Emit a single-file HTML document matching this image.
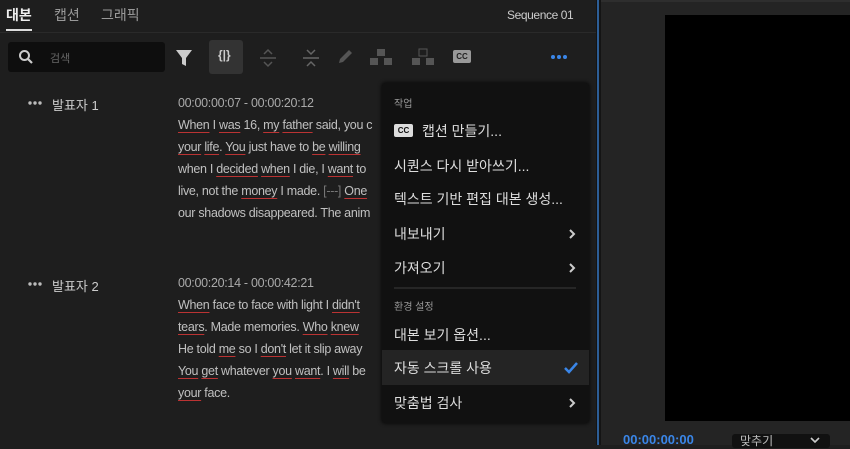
<!DOCTYPE html>
<html><head><meta charset="utf-8"><style>
*{margin:0;padding:0;box-sizing:border-box}
body{width:850px;height:445px;overflow:hidden;background:#1e1e1e;font-family:"Liberation Sans","Noto Sans CJK KR",sans-serif;position:relative;color:#ddd}
.a{position:absolute}
.tab{font-size:14px;color:#999;top:5px}
.u{text-decoration:underline;text-decoration-color:#b33;text-underline-offset:3px}
.tx{font-size:12.5px;color:#c0c0c0;line-height:22px;letter-spacing:-0.3px;white-space:nowrap}
.mi{position:absolute;left:394px;font-size:14px;color:#ddd;white-space:nowrap}
.mh{position:absolute;left:394px;font-size:10px;color:#999}
.chev{position:absolute;left:568px}
.dots{position:absolute;width:16px;height:4px}
</style></head><body>
<div class="a" style="left:0;top:0;width:596px;height:445px;background:#1e1e1e"></div>
<div class="a tab" style="left:6px;color:#eee;font-weight:bold">대본</div>
<div class="a" style="left:6px;top:29px;width:26px;height:2px;background:#ddd"></div>
<div class="a tab" style="left:54px">캡션</div>
<div class="a tab" style="left:101px">그래픽</div>
<div class="a" style="left:507px;top:8px;font-size:12px;color:#ccc;letter-spacing:-0.4px">Sequence 01</div>
<div class="a" style="left:0;top:32px;width:596px;height:1px;background:#2a2a2a"></div>
<div class="a" style="left:8px;top:42px;width:157px;height:30px;background:#0e0e0e;border-radius:3px"></div>
<svg class="a" style="left:18px;top:49px" width="16" height="16"><circle cx="6.5" cy="6.5" r="4.5" fill="none" stroke="#ccc" stroke-width="2"/><line x1="10" y1="10" x2="14" y2="14" stroke="#ccc" stroke-width="2.2"/></svg>
<div class="a" style="left:50px;top:50px;font-size:11px;color:#666">검색</div>
<svg class="a" style="left:175px;top:48px" width="18" height="20"><path d="M1 2H17L11 10V18L7 16V10Z" fill="#ccc"/></svg>
<div class="a" style="left:209px;top:40px;width:34px;height:34px;background:#333;border-radius:3px"></div>
<div class="a" style="left:218px;top:48px;font-size:12px;color:#ccc;font-weight:bold">{|}</div>
<svg class="a" style="left:258px;top:48px" width="20" height="20" stroke="#555" stroke-width="1.5" fill="none"><path d="M6 6L10 2L14 6M2 10H18M6 14L10 18L14 14"/></svg>
<svg class="a" style="left:301px;top:48px" width="20" height="20" stroke="#666" stroke-width="1.5" fill="none"><path d="M6 2L10 6L14 2M2 10H18M6 18L10 14L14 18"/></svg>
<svg class="a" style="left:336px;top:48px" width="18" height="18"><path d="M3 15L4 11L13 2L16 5L7 14Z" fill="#555"/></svg>
<svg class="a" style="left:369px;top:48px" width="24" height="18" fill="#555"><rect x="8" y="1" width="8" height="7"/><rect x="1" y="10" width="8" height="7"/><rect x="15" y="10" width="8" height="7"/></svg>
<svg class="a" style="left:411px;top:48px" width="24" height="18" fill="#555"><rect x="8" y="1" width="8" height="7" fill="none" stroke="#555"/><rect x="1" y="10" width="8" height="7"/><rect x="15" y="10" width="8" height="7"/></svg>
<div class="a" style="left:453px;top:50px;width:18px;height:13px;background:#999;border-radius:2px;font-size:8px;color:#222;font-weight:bold;text-align:center;line-height:13px">CC</div>
<svg class="dots" style="left:551px;top:55px" fill="#3a86e8"><circle cx="2" cy="2" r="2"/><circle cx="8" cy="2" r="2"/><circle cx="14" cy="2" r="2"/></svg>
<svg class="dots" style="left:28px;top:101px" fill="#bbb"><circle cx="2" cy="2" r="1.7"/><circle cx="7" cy="2" r="1.7"/><circle cx="12" cy="2" r="1.7"/></svg>
<div class="a" style="left:52px;top:95px;font-size:13px;color:#ccc">발표자 1</div>
<div class="a tx" style="left:178px;top:92px;color:#aaa">00:00:00:07 - 00:00:20:12</div>
<div class="a tx" style="left:178px;top:114px"><span class="u">When</span> I <span class="u">was</span> 16, <span class="u">my</span> <span class="u">father</span> said, you c<br><span class="u">your</span> <span class="u">life</span>. <span class="u">You</span> just have to <span class="u">be</span> <span class="u">willing</span><br>when I <span class="u">decided</span> <span class="u">when</span> I die, I <span class="u">want</span> to<br>live, not the <span class="u">money</span> I made. <span style="color:#777">[---]</span> <span class="u">One</span><br>our shadows disappeared. The anim</div>
<svg class="dots" style="left:28px;top:282px" fill="#bbb"><circle cx="2" cy="2" r="1.7"/><circle cx="7" cy="2" r="1.7"/><circle cx="12" cy="2" r="1.7"/></svg>
<div class="a" style="left:52px;top:276px;font-size:13px;color:#ccc">발표자 2</div>
<div class="a tx" style="left:178px;top:272px;color:#aaa">00:00:20:14 - 00:00:42:21</div>
<div class="a tx" style="left:178px;top:294px"><span class="u">When</span> face to face with light I <span class="u">didn't</span><br><span class="u">tears</span>. Made memories. <span class="u">Who</span> <span class="u">knew</span><br>He told <span class="u">me</span> so I <span class="u">don't</span> let it slip away<br><span class="u">You</span> <span class="u">get</span> whatever <span class="u">you</span> <span class="u">want</span>. I <span class="u">will</span> be<br><span class="u">your</span> face.</div>
<div class="a" style="left:596px;top:0;width:5px;height:445px;background:#141414"></div>
<div class="a" style="left:597px;top:0;width:2px;height:445px;background:#2d5e96"></div>
<div class="a" style="left:601px;top:0;width:249px;height:445px;background:#242424"></div>
<div class="a" style="left:601px;top:0;width:249px;height:2px;background:#2e2e2e"></div>
<div class="a" style="left:665px;top:15px;width:185px;height:406px;background:#000"></div>
<div class="a" style="left:623px;top:432px;font-size:13px;color:#3a86e8;font-weight:bold">00:00:00:00</div>
<div class="a" style="left:732px;top:434px;width:98px;height:14px;background:#111;border-radius:3px"></div>
<div class="a" style="left:740px;top:432px;font-size:12px;color:#bbb">맞추기</div>
<svg class="a" style="left:810px;top:437px" width="10" height="6"><path d="M1 1L5 5L9 1" fill="none" stroke="#ccc" stroke-width="1.6"/></svg>
<div class="a" style="left:382px;top:83px;width:207px;height:340px;background:#111;border-radius:3px;box-shadow:0 0 4px #000"></div>
<div class="mh" style="top:95px">작업</div>
<div class="a" style="left:394px;top:124px;width:19px;height:13px;background:#ddd;border-radius:2px;font-size:8px;color:#111;font-weight:bold;text-align:center;line-height:13px">CC</div>
<div class="mi" style="left:422px;top:121px">캡션 만들기...</div>
<div class="mi" style="top:156px">시퀀스 다시 받아쓰기...</div>
<div class="mi" style="top:189px">텍스트 기반 편집 대본 생성...</div>
<div class="mi" style="top:224px">내보내기</div>
<svg class="chev" style="top:228px" width="8" height="12"><path d="M2 2L6 6L2 10" fill="none" stroke="#ccc" stroke-width="2"/></svg>
<div class="mi" style="top:258px">가져오기</div>
<svg class="chev" style="top:262px" width="8" height="12"><path d="M2 2L6 6L2 10" fill="none" stroke="#ccc" stroke-width="2"/></svg>
<div class="a" style="left:394px;top:287px;width:182px;height:2px;background:#262626"></div>
<div class="mh" style="top:298px">환경 설정</div>
<div class="mi" style="top:325px">대본 보기 옵션...</div>
<div class="a" style="left:382px;top:350px;width:207px;height:35px;background:#242424"></div>
<div class="mi" style="top:358px">자동 스크롤 사용</div>
<svg class="a" style="left:564px;top:362px" width="14" height="12"><path d="M1 6L5 10L13 1" fill="none" stroke="#3a86e8" stroke-width="2.5"/></svg>
<div class="mi" style="top:393px">맞춤법 검사</div>
<svg class="chev" style="top:397px" width="8" height="12"><path d="M2 2L6 6L2 10" fill="none" stroke="#ccc" stroke-width="2"/></svg>
</body></html>
